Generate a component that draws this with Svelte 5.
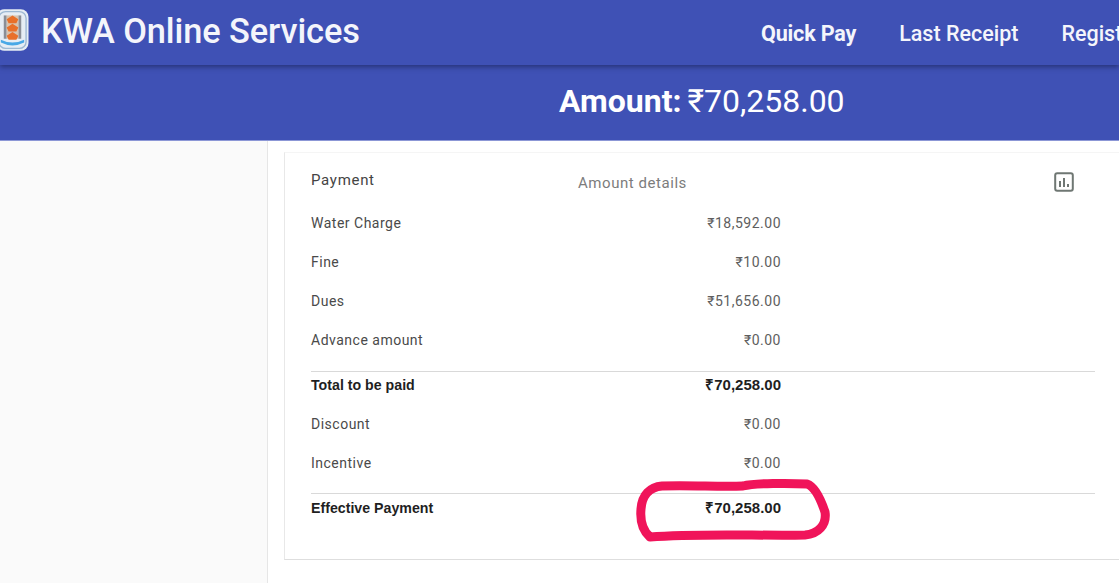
<script lang="ts">
	const rows = [
		{ label: 'Water Charge', value: '₹18,592.00' },
		{ label: 'Fine', value: '₹10.00' },
		{ label: 'Dues', value: '₹51,656.00' },
		{ label: 'Advance amount', value: '₹0.00' }
	];
	const extras = [
		{ label: 'Discount', value: '₹0.00' },
		{ label: 'Incentive', value: '₹0.00' }
	];
</script>

<div class="page">
	<header class="toolbar">
		<svg class="logo" viewBox="0 0 34 44" aria-hidden="true">
			<rect x="0.5" y="0.5" width="33" height="43" rx="8" fill="#e6edf4" />
			<rect x="3" y="3" width="28" height="38" rx="7" fill="none" stroke="#9db8d2" stroke-width="1.4" />
			<rect x="8" y="7" width="3" height="24" fill="#8a8e96" />
			<rect x="23" y="7" width="3" height="24" fill="#8a8e96" />
			<rect x="11" y="7" width="12" height="24" fill="#d8c3ae" />
			<path d="M17 7l6 4-2 4h-8l-2-4zM17 15.5l6 4-2 4h-8l-2-4zM17 24l6 4-2 4h-8l-2-4z" fill="#e8702a" />
			<path d="M5 32q12 6 24 0v3q-12 6-24 0z" fill="#49a8e6" />
		</svg>
		<span class="title">KWA Online Services</span>
		<nav class="links">
			<span class="link strong">Quick Pay</span>
			<span class="link">Last Receipt</span>
			<span class="link">Regist</span>
		</nav>
	</header>

	<div class="amount-bar">
		<b>Amount:</b> ₹70,258.00
	</div>

	<div class="body">
		<aside class="side"></aside>
		<section class="card">
			<div class="head">
				<span class="head-label">Payment</span>
				<span class="head-details">Amount details</span>
				<svg class="chart" viewBox="0 0 20 20" aria-hidden="true">
					<rect x="1.2" y="1.2" width="17.6" height="17.6" rx="2" fill="none" stroke="#6f7773" stroke-width="2" />
					<path d="M6 9v6M10 6v9M14 12v3" stroke="#6f7773" stroke-width="2" fill="none" />
				</svg>
			</div>

			{#each rows as row}
				<div class="row"><span>{row.label}</span><span class="val">{row.value}</span></div>
			{/each}

			<div class="row total first"><span>Total to be paid</span><span class="val">₹70,258.00</span></div>

			{#each extras as row}
				<div class="row"><span>{row.label}</span><span class="val">{row.value}</span></div>
			{/each}

			<div class="row total last"><span>Effective Payment</span><span class="val">₹70,258.00</span></div>
		</section>
	</div>

	<!-- hand drawn marker round the final amount -->
	<svg class="marker" viewBox="0 0 205 72" aria-hidden="true">
		<path
			d="M20 62 C12 55 10 45 11 34 C12 20 20 12 32 11 C60 10 90 12 113 11 C125 8 160 8 177 9 C186 12 192 28 195 37 C197 50 188 59 175 60 C130 61 70 58 20 62 Z"
			fill="none"
			stroke="#f0145a"
			stroke-width="9"
			stroke-linejoin="round"
		/>
	</svg>
</div>

<style>
	:global(body) {
		margin: 0;
		font-family: Roboto, 'Noto Sans', sans-serif;
		background: #fff;
	}

	.page {
		position: relative;
		width: 1119px;
		height: 583px;
		overflow: hidden;
		display: flex;
		flex-direction: column;
	}

	.toolbar {
		position: relative;
		z-index: 1;
		flex: 0 0 65px;
		display: flex;
		align-items: center;
		background: #3f51b5;
		color: #f4f5fb;
		box-shadow: 0 2px 5px rgba(20, 25, 70, 0.55);
		white-space: nowrap;
	}
	.logo {
		width: 33px;
		height: 44px;
		margin-left: -4px;
		margin-top: -6px;
		flex: none;
	}
	.title {
		flex: none;
		width: 319px;
		margin-left: 12px;
		margin-top: -4px;
		font-size: 34.4px;
		font-weight: 500;
		letter-spacing: -0.1px;
	}
	.links {
		flex: none;
		display: flex;
		gap: 43px;
		margin-left: 401px;
		margin-top: 2px;
		font-size: 21.5px;
		font-weight: 500;
	}
	.link.strong {
		font-weight: 700;
		font-size: 21.6px;
		letter-spacing: -0.2px;
	}

	.amount-bar {
		flex: 0 0 76px;
		box-sizing: border-box;
		padding: 19px 0 0 559px;
		background: #3f51b5;
		border-bottom: 1px solid #8c97d6;
		color: #fff;
		font-size: 32px;
		line-height: 35px;
		white-space: nowrap;
		word-spacing: -2px;
	}
	.amount-bar b {
		font-weight: 700;
	}

	.body {
		flex: 1;
		display: flex;
		min-height: 0;
	}
	.side {
		flex: 0 0 267px;
		background: #fafafa;
		border-right: 1px solid #e6e6e6;
	}
	.card {
		margin: 11px 0 0 16px;
		flex: 1;
		height: 408px;
		box-sizing: border-box;
		padding: 0 25px 0 26px;
		border-left: 1px solid #e8e8e8;
		border-top: 1px solid #f5f5f5;
		border-bottom: 1px solid #dedede;
		color: #4a4a4a;
		font-size: 14px;
		letter-spacing: 0.5px;
	}

	.head {
		position: relative;
		display: flex;
		height: 50px;
		padding-top: 17px;
		box-sizing: border-box;
	}
	.head-label {
		width: 267px;
		font-size: 15px;
		letter-spacing: 0.7px;
		line-height: 20px;
		color: #444;
	}
	.head-details {
		margin-top: 3px;
		line-height: 20px;
		font-size: 15px;
		letter-spacing: 0.55px;
		color: #7c7c7c;
	}
	.chart {
		width: 20px;
		height: 20px;
		margin-left: auto;
		margin-right: 21px;
		margin-top: 2px;
	}

	.row {
		display: flex;
		align-items: center;
		height: 39px;
		width: 470px;
		line-height: 20px;
	}
	.row span:first-child {
		flex: 1;
	}
	.val {
		text-align: right;
		color: #5e5e5e;
	}
	.row.total {
		width: 784px;
		height: 29px;
		font-family: 'Liberation Sans', Arial, sans-serif;
		font-weight: 700;
		font-size: 14.2px;
		letter-spacing: 0;
		color: #1f1f1f;
		border-top: 1px solid #d9d9d9;
		box-sizing: border-box;
		padding-right: 314px;
	}
	.row.total .val {
		color: #1f1f1f;
		font-size: 15px;
	}
	.row.first {
		margin-top: 12px;
		margin-bottom: 4px;
		padding-bottom: 2px;
	}
	.row.last {
		margin-top: 11px;
	}

	.marker {
		position: absolute;
		left: 630px;
		top: 475px;
		width: 205px;
		height: 72px;
	}
</style>
